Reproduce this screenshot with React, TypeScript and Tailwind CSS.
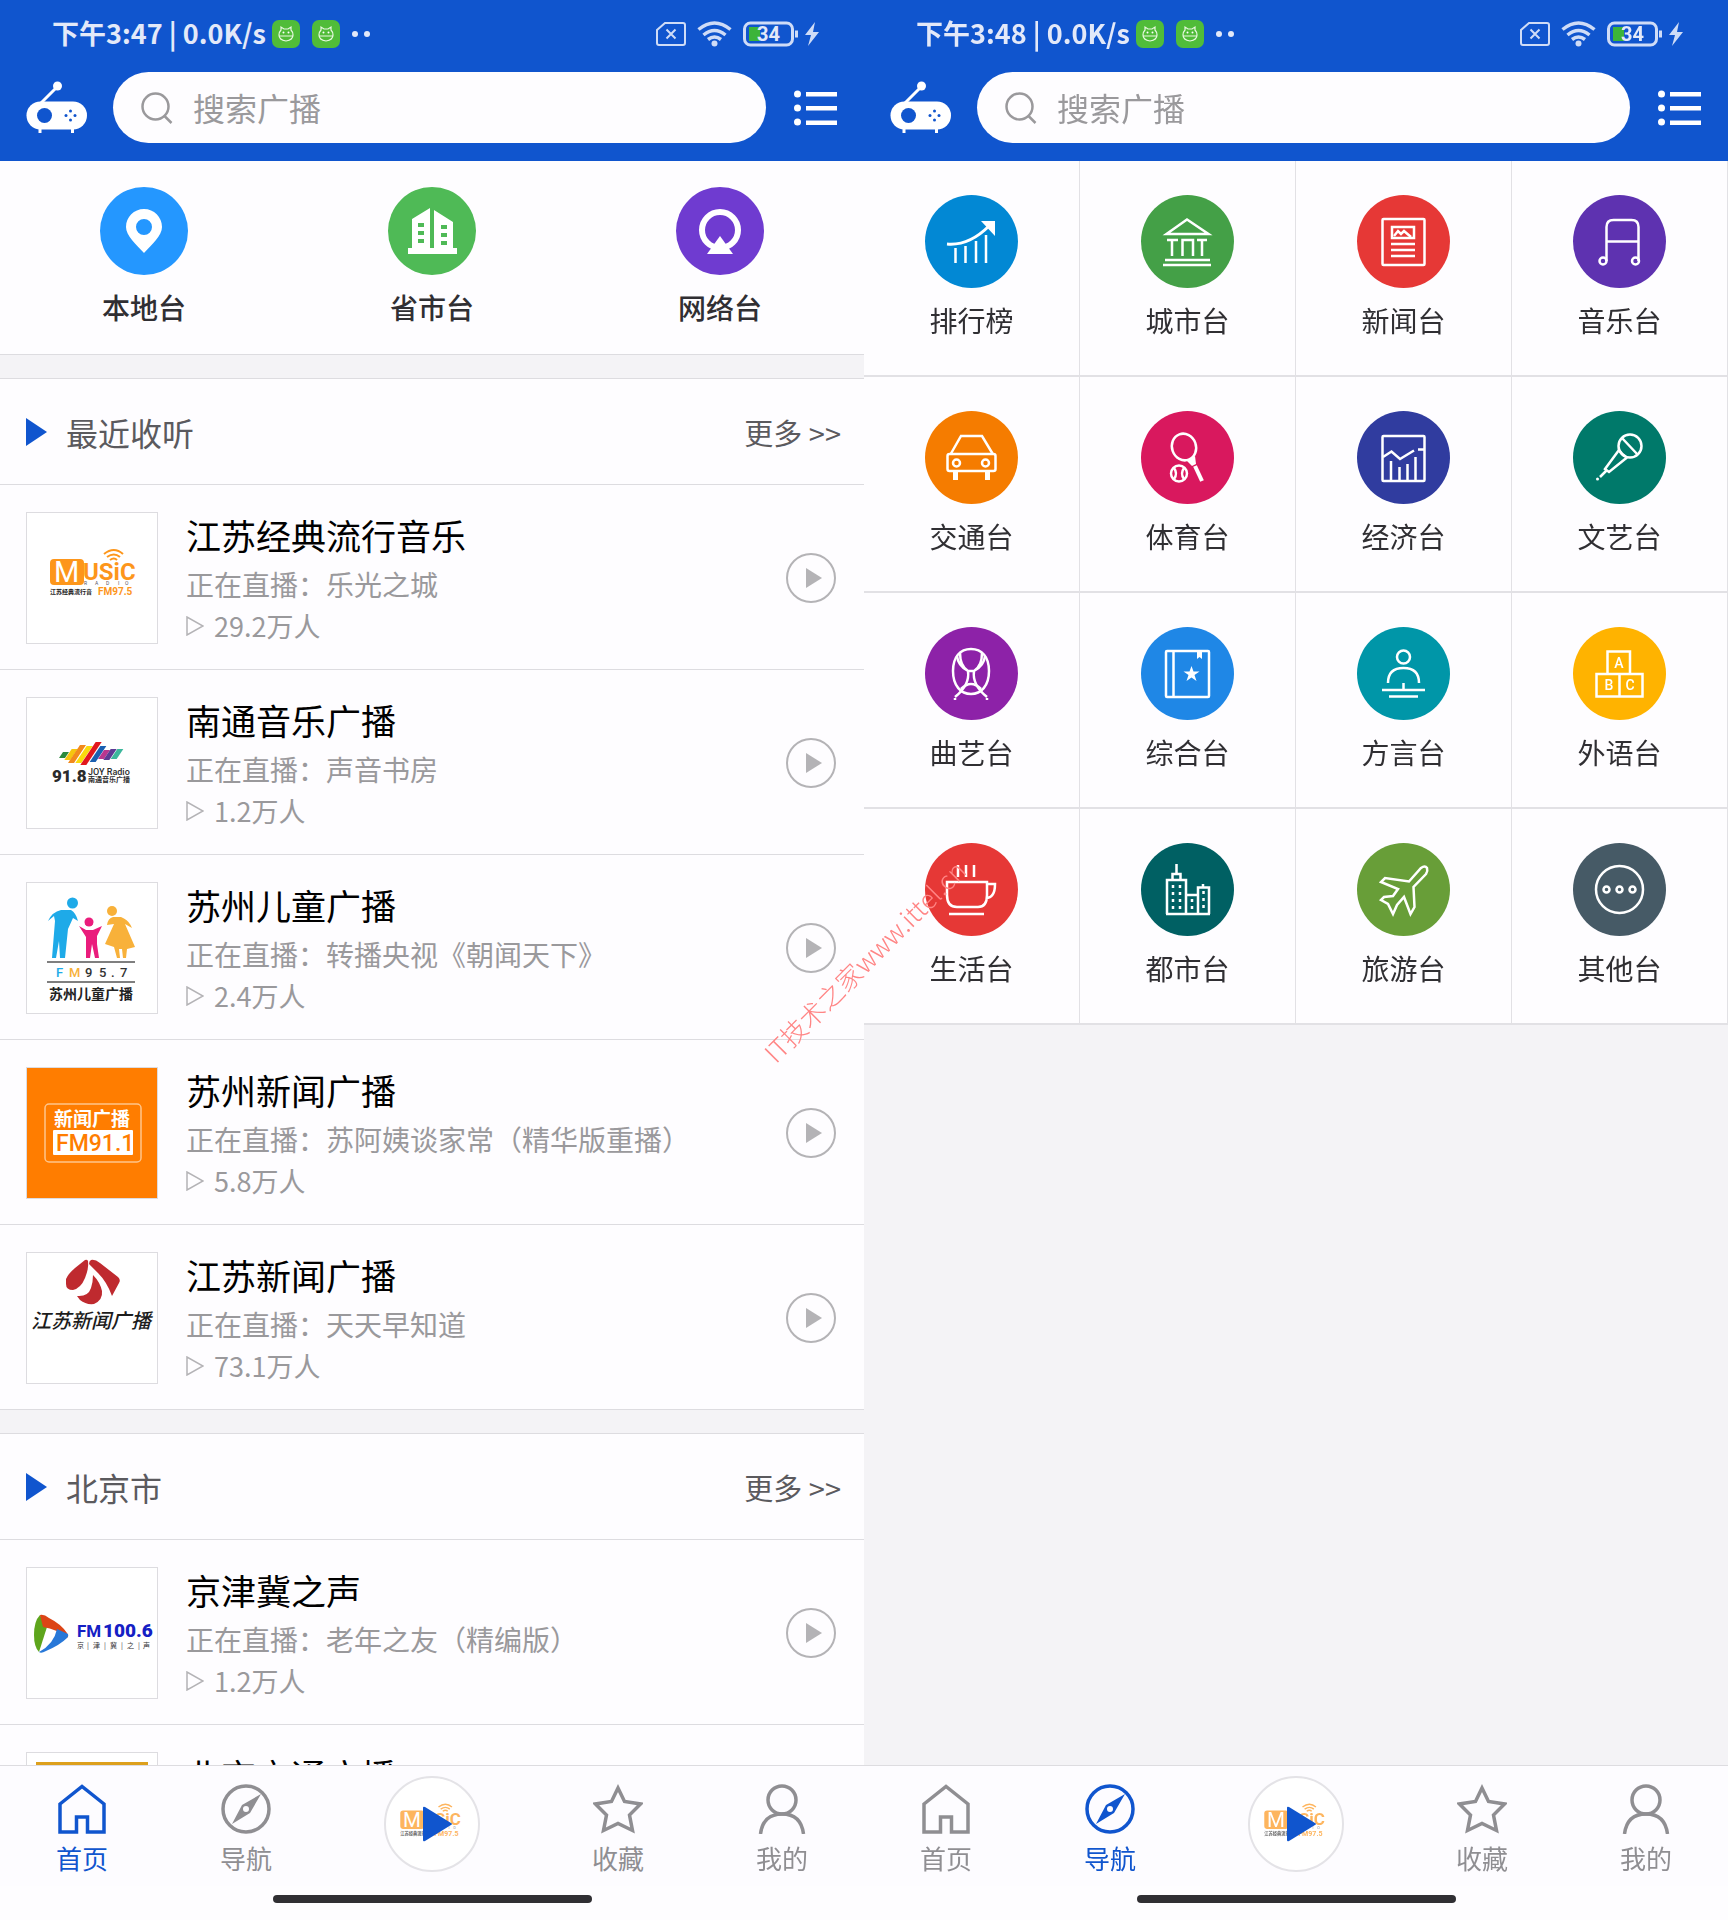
import type { ReactNode } from "react";

type Category = { label: string; color: string; icon: ReactNode };
type Station = { name: string; program: string; listeners: string; logo: ReactNode };
type TabKey = "home" | "nav" | "fav" | "me";

function MusicLogo() {
  return (
    <>
      <rect x="23" y="46" width="34" height="26" rx="4" fill="#fd961b" />
      <g fontFamily="Roboto">
        <text x="27" y="69" fontSize="29" fill="#fff">M</text>
        <text x="56" y="67" fontSize="24" fontWeight="700" fill="#fd961b">USiC</text>
        <text x="57 68 79 91 98" y="72" fontSize="5" fill="#556">RADIO</text>
        <text x="71" y="82" fontSize="10" fontWeight="700" fill="#fd961b">FM97.5</text>
      </g>
      <g fill="none" stroke="#fd961b" strokeWidth="2">
        <path d="M77 41q10-8 19 0" />
        <path d="M80 44q7-5 13 0" />
        <path d="M83 47q4-3 7 0" />
      </g>
      <text x="23" y="81" fontSize="6" fontWeight="700" fill="#222">江苏经典流行音</text>
    </>
  );
}

const stripes = [
  { x: 34, y: 54, h: 6, color: "#2b8a3c" },
  { x: 41, y: 51, h: 11, color: "#f6c50e" },
  { x: 47, y: 47, h: 18, color: "#f28a1c" },
  { x: 54, y: 48, h: 17, color: "#fadb0c" },
  { x: 61, y: 44, h: 23, color: "#e2171c" },
  { x: 68, y: 48, h: 16, color: "#1a5fb0" },
  { x: 74, y: 52, h: 9, color: "#b8368f" },
  { x: 80, y: 51, h: 11, color: "#5c3a94" },
  { x: 87, y: 51, h: 10, color: "#3cb79c" },
];

const recent: Station[] = [
  {
    name: "江苏经典流行音乐",
    program: "乐光之城",
    listeners: "29.2万人",
    logo: <MusicLogo />,
  },
  {
    name: "南通音乐广播",
    program: "声音书房",
    listeners: "1.2万人",
    logo: (
      <>
        {stripes.map((s) => (
          <path
            key={s.x}
            d={`M${s.x + s.h / 3} ${s.y}h6l${-s.h / 1.5} ${s.h}h-6z`}
            fill={s.color}
          />
        ))}
        <g fontFamily="Roboto" fill="#2b2b2b">
          <text x="25" y="84" fontSize="17" fontWeight="900">91.8</text>
          <text x="61" y="77" fontSize="9" fontWeight="500">JOY Radio</text>
        </g>
        <text x="61" y="84" fontSize="7" fontWeight="700" fill="#2b2b2b">南通音乐广播</text>
      </>
    ),
  },
  {
    name: "苏州儿童广播",
    program: "转播央视《朝闻天下》",
    listeners: "2.4万人",
    logo: (
      <>
        <g fill="#1eaae8">
          <circle cx="45.5" cy="20" r="5.5" />
          <path d="M21 38q4-9 13-11h10q5 3 7 11l-5-3-5 11-3 29h-5l-1-17-3 17h-4l3-37-1-5z" />
        </g>
        <g fill="#ea1c7c">
          <circle cx="62" cy="39" r="4.5" />
          <path d="M52 43l7 4h7l9-4-5 10v8l2 14h-4l-3-14-2 14h-4v-21z" />
        </g>
        <g fill="#f8b13a">
          <circle cx="85" cy="28" r="5" />
          <path d="M80 42q1-7 6-8h8q8 3 11 11l-7-4 10 23-8 2-1 9h-3l-1-9h-3l1 9h-3l-3-11-9-3 9-20z" />
        </g>
        <path d="M20 79h88M20 99h88" stroke="#555" strokeWidth="1.5" />
        <g fontFamily="Roboto" fontSize="13" fontWeight="500">
          <text x="29" y="94" fill="#1eaae8">F</text>
          <text x="42" y="94" fill="#f8b13a">M</text>
          <text x="58 72 84 93" y="94" fill="#333">95.7</text>
        </g>
        <text x="22" y="116" fontSize="14" fontWeight="700" fill="#222">苏州儿童广播</text>
      </>
    ),
  },
  {
    name: "苏州新闻广播",
    program: "苏阿姨谈家常（精华版重播）",
    listeners: "5.8万人",
    logo: (
      <>
        <rect width="130" height="130" fill="#ff7d00" />
        <rect x="18" y="36" width="96" height="58" rx="4" fill="none" stroke="#ffc58a" strokeWidth="1.5" />
        <text x="27" y="58" fontSize="19" fontWeight="700" fill="#fff">新闻广播</text>
        <rect x="26" y="62" width="80" height="25" rx="1" fill="#fff" />
        <text x="29" y="83" fontSize="23" fontWeight="500" fill="#ff7d00" fontFamily="Roboto">FM91.1</text>
      </>
    ),
  },
  {
    name: "江苏新闻广播",
    program: "天天早知道",
    listeners: "73.1万人",
    logo: (
      <>
        <g fill="#bf2a2f">
          <path d="M39 26q2-5 9-11l10-8q2-1 3 1 1 7-3 17-4 10-12 12-7 0-7-6z" />
          <path d="M64 7q4-1 9 3l18 14q3 3 1 6l-7 13q-5-14-14-23l-9-9q0-3 2-4z" />
          <path d="M66 22q7 7 9 16 1 9-8 13-8 1-14-4l-3-4q11 1 14-8 2-6 2-13z" />
        </g>
        <text x="4" y="75" fontSize="20" fontWeight="500" fontStyle="italic" fill="#1c1c1c">江苏新闻广播</text>
      </>
    ),
  },
];

const beijing: Station[] = [
  {
    name: "京津冀之声",
    program: "老年之友（精编版）",
    listeners: "1.2万人",
    logo: (
      <>
        <path d="M13 47q-6 6-6 20 0 12 5 17l8-25z" fill="#5ea51c" />
        <path d="M13 47q4-1 9 3 12 6 18 15 2 3 0 5-10-9-24-11z" fill="#dc4416" />
        <path d="M12 84q2 2 7-1 14-6 21-13 2-2 1-4l-11-5q-3 15-18 23z" fill="#2878d8" />
        <g fontFamily="Roboto" fill="#1420c4">
          <text x="50" y="69" fontSize="17" fontWeight="700">FM</text>
          <text x="76" y="69" fontSize="19" fontWeight="900">100.6</text>
        </g>
        <text x="50 60 66 77 83 94 100 111 116" y="80" fontSize="7" fill="#333">京|津|冀|之|声</text>
      </>
    ),
  },
  {
    name: "北京交通广播",
    program: "一路畅通",
    listeners: "3.6万人",
    logo: <rect x="9" y="9" width="112" height="112" fill="#dda01c" />,
  },
];

const shortcuts: Category[] = [
  {
    label: "本地台",
    color: "bg-[#2497ff]",
    icon: (
      <path
        fill="#fff"
        fillRule="evenodd"
        d="M44 22c-10 0-18 8-18 18 0 9 10 17 18 26 8-9 18-17 18-26 0-10-8-18-18-18zm0 10a8 8 0 1 1 0 16 8 8 0 0 1 0-16z"
      />
    ),
  },
  {
    label: "省市台",
    color: "bg-[#4fba56]",
    icon: (
      <>
        <path fill="#fff" d="M20 61h4V32l18-11v40h4V23l19 12v26h4v6H20z" />
        <path
          fill="#4fba56"
          d="M30 36h6v4h-6zM30 44h6v4h-6zM30 52h6v4h-6zM53 38h6v4h-6zM53 46h6v4h-6zM53 54h6v4h-6z"
        />
      </>
    ),
  },
  {
    label: "网络台",
    color: "bg-[#6f3bd0]",
    icon: (
      <>
        <circle cx="44" cy="43" r="18" fill="none" stroke="#fff" strokeWidth="6" />
        <path fill="#fff" d="M44 49 31 67h26z" />
      </>
    ),
  },
];

const categories: Category[] = [
  {
    label: "排行榜",
    color: "bg-[#0288d4]",
    icon: (
      <>
        <path strokeWidth="3" d="M22 49q22 2 42-18" />
        <path d="M56 26h14v15z" fill="#fff" stroke="none" />
        <path d="M30.500 53v15M40.500 51v17M51 46v22M61 40v28" />
      </>
    ),
  },
  {
    label: "城市台",
    color: "bg-[#44a047]",
    icon: (
      <path d="M46 24.500 25.500 39h42zM26 45h11M31 45v16M41.500 61V45h10.500v16M56 45h10M61 45v16M24 65h45M22 70h48" />
    ),
  },
  {
    label: "新闻台",
    color: "bg-[#e63836]",
    icon: (
      <>
        <rect x="25.500" y="24" width="42" height="46" rx="1" />
        <rect x="35" y="32" width="22" height="11" />
        <path d="m37 41 4-5 3 3 3-3 7 6M34 49h24M34 55h24M34 61h24" />
      </>
    ),
  },
  {
    label: "音乐台",
    color: "bg-[#5e32b0]",
    icon: (
      <>
        <path d="M33.500 66V32q0-7 7-7h18q7 0 7 7v34M34 46.500h32" />
        <circle cx="30" cy="66" r="3.500" />
        <circle cx="62.500" cy="66" r="3.500" />
      </>
    ),
  },
  {
    label: "交通台",
    color: "bg-[#f57c00]",
    icon: (
      <>
        <path d="M26 42.500 36 25h21l10.500 17.500" />
        <rect x="22.500" y="43" width="48" height="17" rx="2" />
        <circle cx="31.500" cy="52" r="3.500" />
        <circle cx="60.500" cy="52" r="3.500" />
        <path strokeWidth="5" d="M30.500 61v8M62.500 61v8" />
      </>
    ),
  },
  {
    label: "体育台",
    color: "bg-[#d9185e]",
    icon: (
      <>
        <ellipse cx="43" cy="36" rx="12" ry="13.500" transform="rotate(-20 43 36)" />
        <path d="m46 50 8-5 1 8-4 2z" fill="#fff" stroke="none" />
        <path strokeWidth="4" d="m54 55 7 15" />
        <circle cx="38" cy="62.500" r="8" />
        <path d="M33 57q4 5.500 0 11M43 57q-4 5.500 0 11" />
      </>
    ),
  },
  {
    label: "经济台",
    color: "bg-[#303c9f]",
    icon: (
      <>
        <rect x="25.500" y="25" width="42" height="45" rx="1" />
        <path d="m26 46 8.500-5.500L43 48l14-8.500M61 38.500h6" />
        <path d="M34 50v19M42.500 56v13M50.500 53v16M58.500 46v23" />
      </>
    ),
  },
  {
    label: "文艺台",
    color: "bg-[#00796a]",
    icon: (
      <>
        <circle cx="57" cy="35" r="11.500" />
        <path d="m49 27 16 17M46 39 32 58l4 3 18-14.500M46 39q3 5 8 7.500M33 60l-6 6" />
        <circle cx="24.500" cy="68" r="1.500" fill="#fff" stroke="none" />
      </>
    ),
  },
  {
    label: "曲艺台",
    color: "bg-[#8d22a8]",
    icon: (
      <>
        <path d="M46 22c-11 0-18 8-18 22 0 15 8 23 18 23s18-8 18-23c0-14-7-22-18-22z" />
        <path d="M35 26q0 13 8 18h6q8-5 8-18M32 29q1 10 11 15 2 14-13 26M60 29q-1 10-11 15-2 14 13 26" />
        <path d="M36 62q10-10 20 0" />
        <path d="M30 71v2M62 71v2" />
      </>
    ),
  },
  {
    label: "综合台",
    color: "bg-[#1f87e6]",
    icon: (
      <>
        <rect x="25" y="24" width="43" height="46" rx="1" />
        <path d="M32.500 24v46" />
        <path d="M56 25h5v7l-2.500-2-2.500 2z" fill="#fff" stroke="none" />
        <path
          d="m50.500 39 2 5.500h6l-5 3.500 2 6-5-3.500-5 3.500 2-6-5-3.500h6z"
          fill="#fff"
          stroke="none"
        />
      </>
    ),
  },
  {
    label: "方言台",
    color: "bg-[#0096a8]",
    icon: (
      <>
        <circle cx="46.500" cy="30" r="6.500" />
        <path d="M31 56q0-15 15.500-15T62 56M46.500 56v6M25 63h43M32 69.500h29" />
      </>
    ),
  },
  {
    label: "外语台",
    color: "bg-[#ffb300]",
    icon: (
      <>
        <path d="M34.500 47V24.500H57V47M23.500 47h46v22.500h-46zM46.500 47v22.500" />
        <g fill="#fff" stroke="none" fontSize="14" fontWeight="500" fontFamily="Roboto" textAnchor="middle">
          <text x="46" y="41">A</text>
          <text x="36" y="63">B</text>
          <text x="57" y="63">C</text>
        </g>
      </>
    ),
  },
  {
    label: "生活台",
    color: "bg-[#e63836]",
    icon: (
      <>
        <path d="M33 22v12M41 22v12M49 22v12" />
        <path d="M22 39h40v13q0 12-9 12H32q-10 0-10-12zM62 41h8q0 14-9 14M24 71h35" />
      </>
    ),
  },
  {
    label: "都市台",
    color: "bg-[#006063]",
    icon: (
      <>
        <path d="M35.500 21v10M31.500 37v-6h8v6M26 71V37h19v34M45 52h12M57 71V44.500h11V71M62 41v3M25 71h44M45 71h12" />
        <path strokeDasharray="3 4" d="M32 42v26M39 42v26M51 56v12M62.500 48v20" />
      </>
    ),
  },
  {
    label: "旅游台",
    color: "bg-[#689e38]",
    icon: (
      <path d="M52 38.500 64 25q4-3 6 0 1 3-1 6L56.500 44l1 20-4 7-6.500-17-7 8-4 9-5-10-7-4 3-3 9-1 5-7-17-7 4-4z" />
    ),
  },
  {
    label: "其他台",
    color: "bg-[#465a66]",
    icon: (
      <>
        <circle cx="46.500" cy="46.500" r="23.500" />
        <circle cx="33.500" cy="46.500" r="3" />
        <circle cx="46.500" cy="46.500" r="3" />
        <circle cx="59.500" cy="46.500" r="3" />
      </>
    ),
  },
];

const tabs: { key: TabKey; label: string; icon: ReactNode }[] = [
  {
    key: "home",
    label: "首页",
    icon: <path d="M3 20 25 2.500 47 20v28H30.500V33h-11v15H3z" />,
  },
  {
    key: "nav",
    label: "导航",
    icon: (
      <>
        <circle cx="25" cy="25" r="23" />
        <path
          fill="currentColor"
          fillRule="evenodd"
          stroke="none"
          d="m40 10-11 19-18 11 10-19zM25 22a3 3 0 1 0 0 6 3 3 0 0 0 0-6z"
        />
      </>
    ),
  },
  {
    key: "fav",
    label: "收藏",
    icon: (
      <path d="m25 4 6.500 13.500L47.500 20 36.500 31l3 15.500L25 39.500l-14.500 7 3-15.500L2.500 20l16-2.500z" />
    ),
  },
  {
    key: "me",
    label: "我的",
    icon: (
      <>
        <circle cx="25" cy="16" r="14" />
        <path d="M3.500 50Q6 30 25 30t21.500 20" />
      </>
    ),
  },
];

function AppBadge() {
  return (
    <svg viewBox="0 0 28 28" className="size-7">
      <rect width="28" height="28" rx="7" fill="#50bc39" />
      <path
        d="M9 10V7l3 2h4l3-2v3q2 2 2 5 0 5-7 6-7-1-7-6 0-3 2-5zM7.500 16h13"
        fill="none"
        stroke="#e8f8e0"
        strokeWidth="1.200"
      />
      <circle cx="11.500" cy="12.500" r="1" fill="#fff" />
      <circle cx="16.500" cy="12.500" r="1" fill="#fff" />
    </svg>
  );
}

function StatusBar({ time }: { time: string }) {
  return (
    <div className="mb-1 flex h-[68px] items-center justify-between pr-[44px] pl-[52px] text-[#e3e9f9]">
      <div className="flex items-center">
        <span className="mr-1.5 pb-0.5 text-[27px] leading-9 font-bold whitespace-pre">
          {time} | 0.0K/s
        </span>
        <span className="flex gap-3">
          <AppBadge />
          <AppBadge />
        </span>
        <span className="ml-3 flex gap-1.5">
          <i className="size-1.5 rounded-full bg-current" />
          <i className="size-1.5 rounded-full bg-current" />
        </span>
      </div>
      <svg viewBox="0 0 164 26" className="h-[26px] w-[164px]" fill="none" stroke="#cfdcf7">
        <path strokeWidth="2" d="M9 2h18q2 0 2 2v18q0 2-2 2H3q-2 0-2-2V9z" />
        <path strokeWidth="2" d="m10.500 8.500 9 9m0-9-9 9" />
        <path strokeWidth="3.500" d="M42.500 8.500q16-13 32 0M47.500 14q11-9 22 0M52 18.500q6.500-5 13 0" />
        <circle cx="58.500" cy="22.500" r="3" fill="#cfdcf7" stroke="none" />
        <rect x="88.500" y="2" width="48" height="22" rx="6" strokeWidth="3" />
        <path d="M93 6h11v14H93z" fill="#3cb43a" stroke="none" />
        <path strokeWidth="3" d="M140.500 9.500v7" />
        <text x="101" y="20" fontSize="20" fontWeight="700" fontFamily="Roboto" fill="#e3e9f9" stroke="none">
          34
        </text>
        <path d="m159 1-10 13h6l-3 11 11-14h-6z" fill="#cfdcf7" stroke="none" />
      </svg>
    </div>
  );
}

function Header({ time, id }: { time: string; id: string }) {
  return (
    <header className="bg-[#1055ce] pb-[18px]">
      <StatusBar time={time} />
      <div className="flex items-center px-[26px]">
        <svg viewBox="0 0 62 54" className="h-[54px] w-[62px] shrink-0" fill="#fff">
          <circle cx="31.500" cy="5" r="4.500" />
          <path d="M31 6 15 22" stroke="#fff" strokeWidth="3" />
          <rect x=".5" y="20.500" width="60.500" height="28" rx="14" />
          <path d="M12.500 47h3v5h-3zM45 47h3v5h-3z" />
          <g fill="#1055ce">
            <circle cx="18.500" cy="34.500" r="7.500" />
            <circle cx="44.500" cy="30" r="1.500" />
            <circle cx="44.500" cy="39" r="1.500" />
            <circle cx="40" cy="34.500" r="1.500" />
            <circle cx="49" cy="34.500" r="1.500" />
          </g>
        </svg>
        <label
          htmlFor={id}
          className="ml-[25px] flex h-[71px] min-w-0 flex-1 items-center rounded-full bg-[#fefdff] pl-7"
        >
          <svg viewBox="0 0 32 32" className="size-8 shrink-0" fill="none" stroke="#9a999c" strokeWidth="2.500">
            <circle cx="14.500" cy="14.500" r="13" />
            <path d="m23.500 24 7 7" />
          </svg>
          <input
            id={id}
            type="text"
            aria-label="搜索广播"
            placeholder="搜索广播"
            className="ml-5 min-w-0 flex-1 bg-transparent pb-0.5 text-[32px] leading-[48px] text-[#333] outline-none placeholder:text-[#9a999c]"
          />
        </label>
        <button type="button" aria-label="菜单" className="ml-7 shrink-0">
          <svg viewBox="0 0 44 36" className="h-9 w-11" fill="#fff">
            <circle cx="3.500" cy="4" r="3.500" />
            <circle cx="3.500" cy="18" r="3.500" />
            <circle cx="3.500" cy="32" r="3.500" />
            <path d="M12 2h31v4.500H12zM12 16h31v4.500H12zM12 30.500h31V35H12z" />
          </svg>
        </button>
      </div>
    </header>
  );
}

function StationRow({ station }: { station: Station }) {
  return (
    <li className="flex items-center border-b border-[#dddce0] px-[26px] pt-[27px] pb-[25px]">
      <svg viewBox="0 0 130 130" className="size-[132px] shrink-0 border border-[#dddce0] bg-white">
        {station.logo}
      </svg>
      <div className="ml-7 min-w-0 flex-1 self-start">
        <h3 className="text-[35px] leading-[46px] text-black">{station.name}</h3>
        <p className="text-[28px] leading-[52px] text-[#9a999c]">正在直播：{station.program}</p>
        <p className="flex items-center text-[27px] leading-[32px] text-[#9a999c]">
          <svg viewBox="0 0 18 20" className="mr-[10px] h-5 w-[18px]" fill="none" stroke="#b4b3b6" strokeWidth="1.500">
            <path d="M1 1v18l16-9z" />
          </svg>
          {station.listeners}
        </p>
      </div>
      <button type="button" aria-label={`播放${station.name}`} className="mr-[2px] shrink-0">
        <svg viewBox="0 0 50 50" className="size-[50px]">
          <circle cx="25" cy="25" r="24" fill="none" stroke="#b4b3b6" strokeWidth="2" />
          <path d="M20 15v20l16-10z" fill="#b4b3b6" />
        </svg>
      </button>
    </li>
  );
}

function StationSection({ title, stations }: { title: string; stations: Station[] }) {
  return (
    <section className="mt-[23px] bg-[#fefdff]">
      <div className="flex h-[107px] items-center border-y border-[#dddce0] pr-[23px] pl-[26px] text-[#5b5a5e]">
        <svg viewBox="0 0 21 28" className="mr-[19px] h-7 w-[21px]">
          <path d="M0 0v28l21-14z" fill="#1055ce" />
        </svg>
        <h2 className="flex-1 text-[32px] leading-[48px]">{title}</h2>
        <a href="#more" className="text-[29px] leading-[44px]">更多 &gt;&gt;</a>
      </div>
      <ul>
        {stations.map((s) => (
          <StationRow key={s.name} station={s} />
        ))}
      </ul>
    </section>
  );
}

function BottomNav({ active }: { active: TabKey }) {
  const renderTab = (tab: (typeof tabs)[number]) => (
    <a
      key={tab.key}
      href={`#${tab.key}`}
      className={`flex flex-col items-center pt-[18px] ${
        tab.key === active ? "text-[#1055ce]" : "text-[#8f8e92]"
      }`}
    >
      <svg viewBox="0 0 50 50" className="size-[50px]" fill="none" stroke="currentColor" strokeWidth="3.500">
        {tab.icon}
      </svg>
      <span className="mt-1 text-[26px] leading-10">{tab.label}</span>
    </a>
  );

  return (
    <footer className="bg-[#fefdff]">
      <nav className="grid h-[121px] grid-cols-[1fr_1fr_208px_1fr_1fr] border-t border-[#dddce0] bg-[#fdfcff]">
        {tabs.slice(0, 2).map(renderTab)}
        <button type="button" aria-label="播放" className="mt-[10px] size-24 justify-self-center">
          <svg viewBox="0 0 96 96">
            <circle cx="48" cy="48" r="47" fill="#fff" stroke="#e4e3e7" strokeWidth="2" />
            <svg x="0" y="2" width="92" height="92" viewBox="0 0 130 130" opacity=".7">
              <MusicLogo />
            </svg>
            <path d="M39 32q0-2 2-1l26 16q2 1 0 2L41 65q-2 1-2-1z" fill="#1055ce" />
          </svg>
        </button>
        {tabs.slice(2).map(renderTab)}
      </nav>
      <div className="flex h-[34px] justify-center pt-[9px]">
        <div className="h-2 w-[319px] rounded-full bg-[#302f33]" />
      </div>
    </footer>
  );
}

function Phone({ time, active, children }: { time: string; active: TabKey; children: ReactNode }) {
  return (
    <div className="flex min-w-0 flex-1 flex-col">
      <Header time={time} id={`search-${active}`} />
      <main className="min-h-0 flex-1 overflow-y-auto bg-[#f4f3f6] [scrollbar-width:none]">
        {children}
      </main>
      <BottomNav active={active} />
    </div>
  );
}

export default function App() {
  return (
    <div className="relative flex h-screen overflow-hidden font-['Noto_Sans_CJK_SC',sans-serif]" lang="zh-CN">
      <Phone time="下午3:47" active="home">
        <div className="grid grid-cols-3 border-b border-[#dddce0] bg-[#fefdff]">
          {shortcuts.map((s) => (
            <a key={s.label} href="#local" className="flex flex-col items-center pt-[26px] pb-[25px]">
              <span className={`size-[88px] rounded-full ${s.color}`}>
                <svg viewBox="0 0 88 88">{s.icon}</svg>
              </span>
              <span className="mt-[10px] text-[28px] leading-[44px] font-medium text-[#302f33]">
                {s.label}
              </span>
            </a>
          ))}
        </div>
        <StationSection title="最近收听" stations={recent} />
        <StationSection title="北京市" stations={beijing} />
      </Phone>

      <Phone time="下午3:48" active="nav">
        <div className="grid grid-cols-4">
          {categories.map((c) => (
            <a
              key={c.label}
              href="#category"
              className="flex h-54 flex-col items-center border-r border-b-2 border-[#e2e1e5] bg-[#fefdff] pt-[34px]"
            >
              <span className={`size-[93px] rounded-full ${c.color}`}>
                <svg viewBox="0 0 93 93" fill="none" stroke="#fff" strokeWidth="2.500">
                  {c.icon}
                </svg>
              </span>
              <span className="mt-[10px] text-[28px] leading-[44px] text-[#302f33]">{c.label}</span>
            </a>
          ))}
        </div>
      </Phone>

      {/* Watermark */}
      <div className="pointer-events-none absolute inset-0 flex items-center justify-center">
        <span className="-rotate-45 text-[26px] font-light whitespace-nowrap text-[#ff8585]">
          IT技术之家www.ittel.cn
        </span>
      </div>
    </div>
  );
}
